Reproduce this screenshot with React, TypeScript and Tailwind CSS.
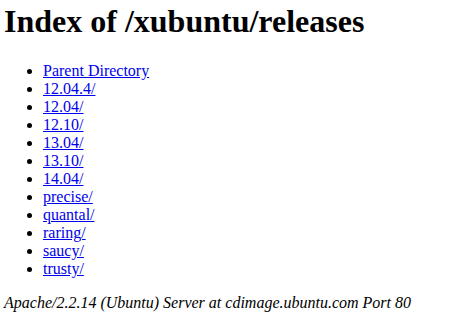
import React from "react";

const items = [
  "Parent Directory",
  "12.04.4/",
  "12.04/",
  "12.10/",
  "13.04/",
  "13.10/",
  "14.04/",
  "precise/",
  "quantal/",
  "raring/",
  "saucy/",
  "trusty/",
];

export default function App() {
  return (
    <div className="w-[455px] h-[320px] overflow-hidden bg-white text-black px-[4px] pt-[1px]" style={{ fontFamily: '"Liberation Serif", serif' }}>
      <h1 className="text-[32px] font-bold leading-[37px] m-0 mt-[2px]">Index of /xubuntu/releases</h1>
      <ul className="list-disc pl-[39px] mt-[22px] mb-[16px] text-[16px] leading-[18px]">
        {items.map((t) => (
          <li key={t}>
            <a href="#" className="text-[#0000ee] underline">
              {t}
            </a>
          </li>
        ))}
      </ul>
      <address className="italic text-[16px] leading-[18px]">Apache/2.2.14 (Ubuntu) Server at cdimage.ubuntu.com Port 80</address>
    </div>
  );
}
